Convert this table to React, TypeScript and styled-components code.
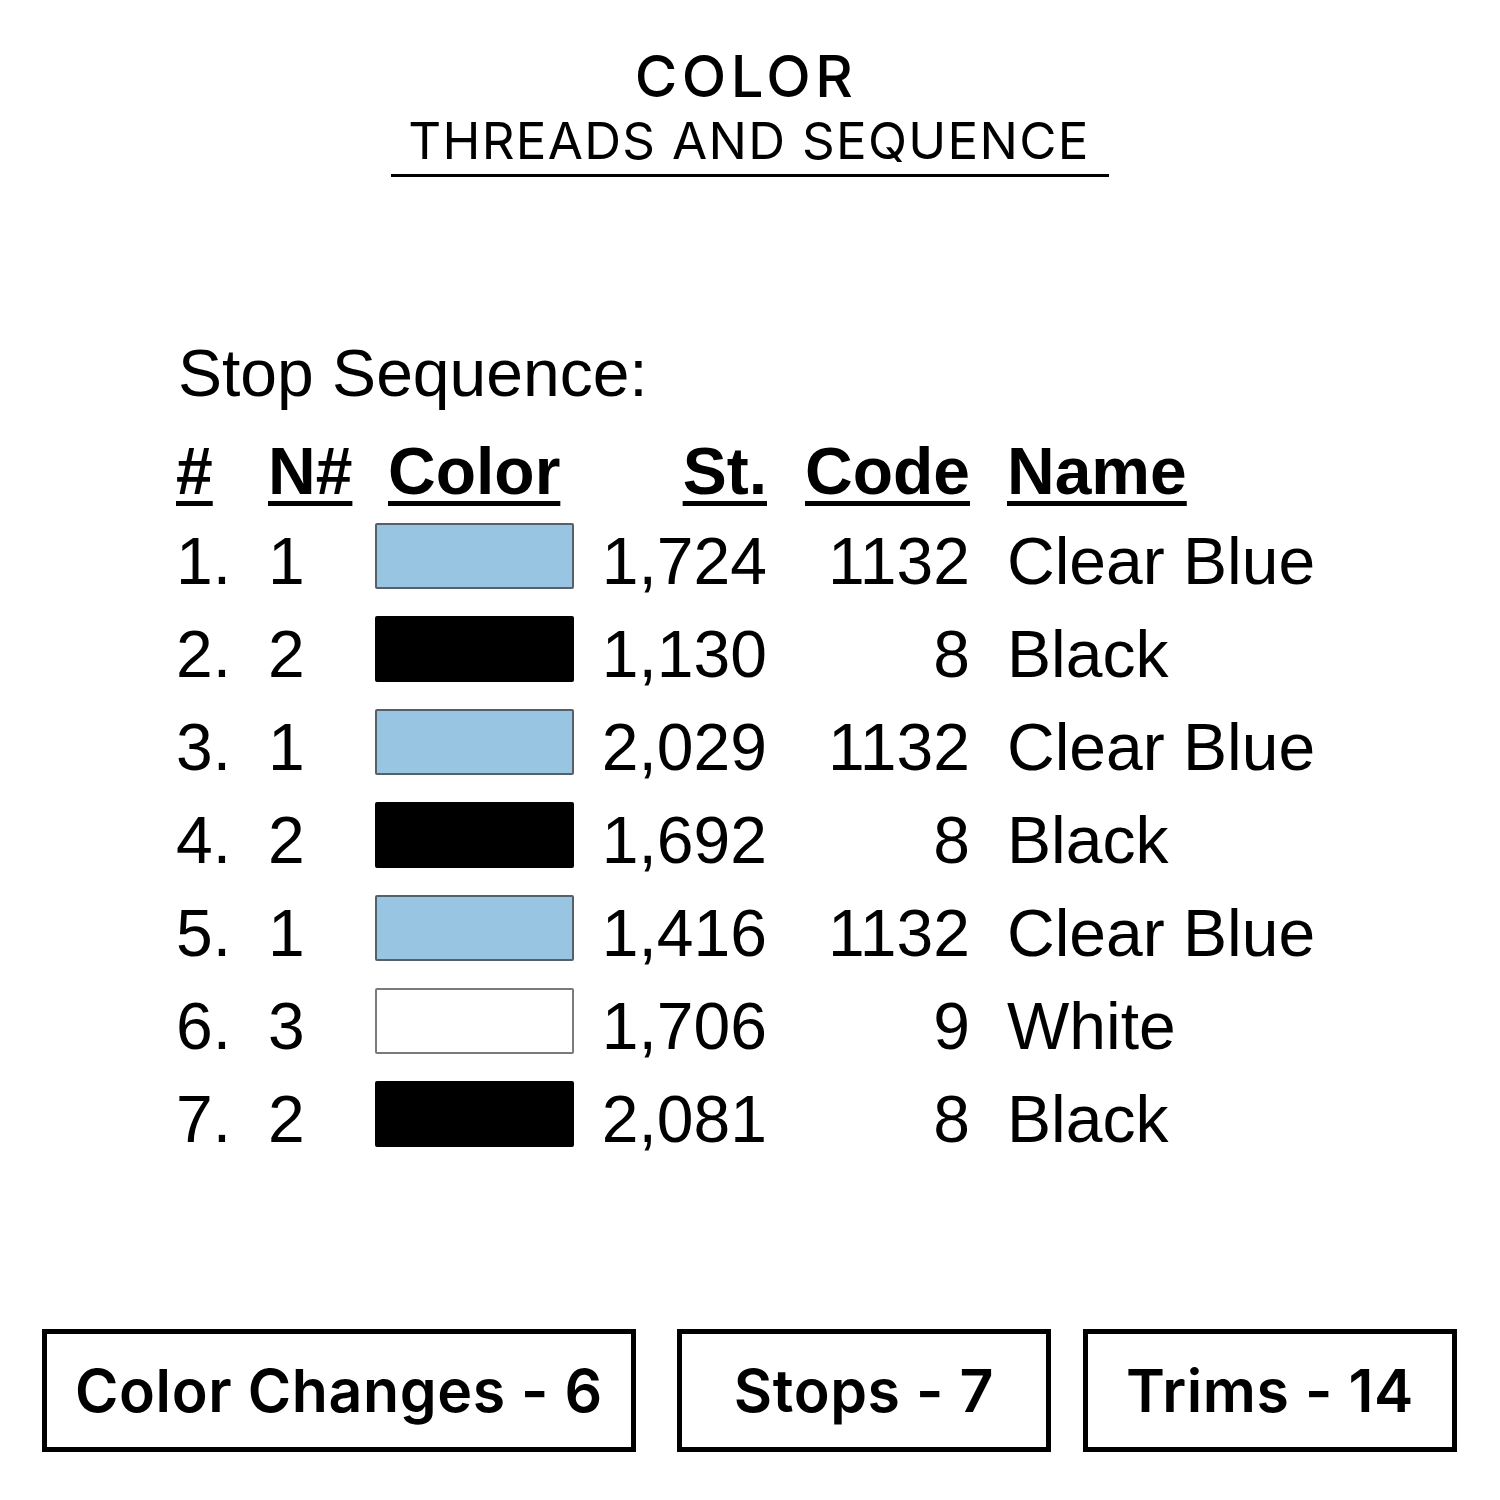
import React from 'react';
import styled, { createGlobalStyle } from 'styled-components';

type StopRow = {
  stop: string;
  needle: string;
  swatch: string;
  stitches: string;
  code: string;
  name: string;
};

const rows: StopRow[] = [
  { stop: '1.', needle: '1', swatch: 'blue', stitches: '1,724', code: '1132', name: 'Clear Blue' },
  { stop: '2.', needle: '2', swatch: 'black', stitches: '1,130', code: '8', name: 'Black' },
  { stop: '3.', needle: '1', swatch: 'blue', stitches: '2,029', code: '1132', name: 'Clear Blue' },
  { stop: '4.', needle: '2', swatch: 'black', stitches: '1,692', code: '8', name: 'Black' },
  { stop: '5.', needle: '1', swatch: 'blue', stitches: '1,416', code: '1132', name: 'Clear Blue' },
  { stop: '6.', needle: '3', swatch: 'white', stitches: '1,706', code: '9', name: 'White' },
  { stop: '7.', needle: '2', swatch: 'black', stitches: '2,081', code: '8', name: 'Black' },
];

const swatchFill: Record<string, string> = {
  blue: '#98c6e2',
  black: '#000000',
  white: '#ffffff',
};

const swatchEdge: Record<string, string> = {
  blue: '#56606a',
  black: '#000000',
  white: '#7a7a7a',
};

const App: React.FC = () => {
  return (
    <>
      <GlobalStyle />
      <Page>
        <Heading>
          <Title>COLOR</Title>
          <Subtitle>THREADS AND SEQUENCE</Subtitle>
        </Heading>

        <Sheet>
          <SheetTitle>Stop Sequence:</SheetTitle>
          <HeadRow>
            <HeadCell>#</HeadCell>
            <HeadCell>N#</HeadCell>
            <HeadCell $indent={13}>Color</HeadCell>
            <HeadCell $right>St.</HeadCell>
            <HeadCell $right>Code</HeadCell>
            <HeadCell $indent={37}>Name</HeadCell>
          </HeadRow>
          {rows.map((r) => (
            <Row key={r.stop}>
              <Cell>{r.stop}</Cell>
              <Cell>{r.needle}</Cell>
              <Swatch $fill={swatchFill[r.swatch]} $edge={swatchEdge[r.swatch]} />
              <Cell $right>{r.stitches}</Cell>
              <Cell $right>{r.code}</Cell>
              <Cell $indent={37}>{r.name}</Cell>
            </Row>
          ))}
        </Sheet>

        <Stats>
          <StatBox $width={594}>Color Changes - 6</StatBox>
          <StatBox $width={374} $offset={41}>Stops - 7</StatBox>
          <StatBox $width={374} $offset={32}>Trims - 14</StatBox>
        </Stats>
      </Page>
    </>
  );
};

export default App;

const GlobalStyle = createGlobalStyle`
  html, body {
    margin: 0;
    padding: 0;
    background: #ffffff;
  }
`;

const Page = styled.div`
  width: 1500px;
  height: 1500px;
  background: #ffffff;
  color: #000000;
  display: flex;
  flex-direction: column;
  overflow: hidden;
`;

const Heading = styled.header`
  display: flex;
  flex-direction: column;
  align-items: center;
  padding-top: 47px;
  font-family: Inter, 'Noto Sans', sans-serif;
`;

const Title = styled.div`
  font-size: 58px;
  line-height: 58px;
  font-weight: 500;
  letter-spacing: 4.5px;
  margin-right: 8px;
`;

const Subtitle = styled.div`
  margin-top: 10px;
  padding: 0 19px 8px 17px;
  font-size: 51px;
  line-height: 51px;
  font-weight: 400;
  letter-spacing: 1.3px;
  border-bottom: 3px solid #000000;
`;

const Sheet = styled.section`
  margin-top: 150px;
  padding-left: 176px;
  font-family: 'Liberation Sans', Arial, sans-serif;
  font-size: 66px;
`;

const SheetTitle = styled.div`
  height: 98px;
  line-height: 93px;
  padding-left: 2px;
`;

const grid = `
  display: grid;
  grid-template-columns: 92px 107px 199px 193px 203px auto;
  align-items: start;
`;

const HeadRow = styled.div`
  ${grid}
  height: 90px;
  line-height: 93px;
  font-weight: 700;
`;

const HeadCell = styled.div<{ $right?: boolean; $indent?: number }>`
  justify-self: ${(p) => (p.$right ? 'end' : 'start')};
  margin-left: ${(p) => p.$indent ?? 0}px;
  text-decoration: underline;
  text-decoration-thickness: 5px;
  text-underline-offset: 7px;
  white-space: nowrap;
`;

const Row = styled.div`
  ${grid}
  height: 93px;
  line-height: 93px;
`;

const Cell = styled.div<{ $right?: boolean; $indent?: number }>`
  justify-self: ${(p) => (p.$right ? 'end' : 'start')};
  margin-left: ${(p) => p.$indent ?? 0}px;
  white-space: nowrap;
`;

const Swatch = styled.div<{ $fill: string; $edge: string }>`
  box-sizing: border-box;
  margin-top: 8px;
  width: 199px;
  height: 66px;
  background: ${(p) => p.$fill};
  border: 2px solid ${(p) => p.$edge};
  border-radius: 2px;
`;

const Stats = styled.div`
  margin-top: auto;
  margin-bottom: 48px;
  padding-left: 42px;
  display: flex;
  font-family: Inter, 'Noto Sans', sans-serif;
`;

const StatBox = styled.div<{ $width: number; $offset?: number }>`
  box-sizing: border-box;
  width: ${(p) => p.$width}px;
  height: 123px;
  margin-left: ${(p) => p.$offset ?? 0}px;
  border: 5px solid #000000;
  display: flex;
  align-items: center;
  justify-content: center;
  font-size: 59px;
  font-weight: 600;
  letter-spacing: 0.6px;
  white-space: nowrap;
`;
